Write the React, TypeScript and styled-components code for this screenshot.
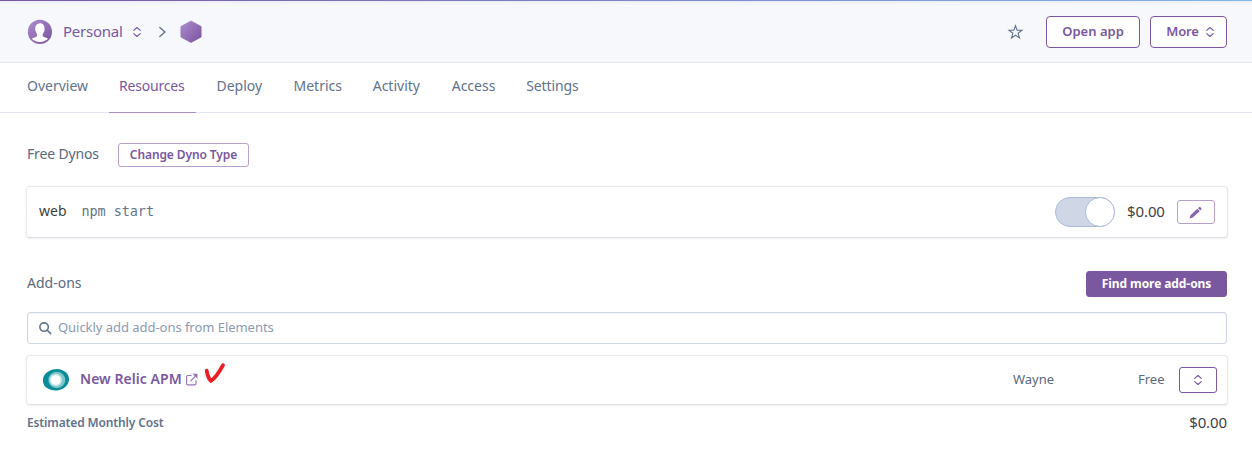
import React from 'react';
import styled, { createGlobalStyle } from 'styled-components';

const Global = createGlobalStyle`
  * { box-sizing: border-box; }
  body {
    margin: 0;
    background: #fff;
    font-family: 'Noto Sans', 'Open Sans', sans-serif;
    font-size: 14px;
    color: #596981;
  }
`;

const Page = styled.div`
  height: 453px;
  overflow: hidden;
`;

const TopStripe = styled.div`
  height: 1px;
  background: linear-gradient(90deg, #79589f, #7d8fd0 60%, #7fb8e8);
`;

const Header = styled.header`
  height: 62px;
  display: flex;
  align-items: center;
  padding: 0 25px 0 27px;
  background: linear-gradient(#eceef5, #f7f8fc 4px);
  border-bottom: 1px solid #e3e7f2;
`;

const Label = styled.span<{ $size?: number; $weight?: number; $color?: string; $spacing?: number; $width?: number; $left?: number }>`
  flex: none;
  box-sizing: content-box;
  white-space: nowrap;
  line-height: 20px;
  padding-bottom: ${p => (p.$size === 12 ? 0 : 2)}px;
  margin-left: ${p => p.$left ?? 0}px;
  width: ${p => (p.$width ? `${p.$width}px` : 'auto')};
  font-size: ${p => p.$size ?? 14}px;
  font-weight: ${p => p.$weight ?? 400};
  color: ${p => p.$color ?? '#596981'};
  letter-spacing: ${p => p.$spacing ?? 0}px;
`;

const Amount = styled(Label)`
  font-size: 15px;
  color: #3f3f44;
  letter-spacing: -0.1px;
`;

const Crumbs = styled.div`
  flex: 1;
  display: flex;
  align-items: center;
`;

const Icon = styled.svg<{ $left?: number }>`
  display: block;
  flex: none;
  overflow: visible;
  margin-left: ${p => p.$left ?? 0}px;
`;

const CheckMark = styled(Icon)`
  margin-bottom: 14px;
`;

const Button = styled.button<{ $w: number; $h: number; $soft?: boolean; $solid?: boolean; $left?: number }>`
  flex: none;
  display: flex;
  align-items: center;
  justify-content: center;
  width: ${p => p.$w}px;
  height: ${p => p.$h}px;
  margin: 0 0 0 ${p => p.$left ?? 0}px;
  padding: 0;
  border: 1px solid ${p => (p.$soft ? '#b79fd0' : '#79589f')};
  border-radius: ${p => (p.$h > 30 ? 4 : 3)}px;
  background: ${p => (p.$solid ? '#79589f' : '#fff')};
  font-family: inherit;
`;

const Tabs = styled.nav`
  display: flex;
  gap: 11px;
  height: 50px;
  padding-left: 17px;
  border-bottom: 1px solid #e3e7f2;
`;

const Tab = styled.a<{ $w: number; $active?: boolean; $spacing?: number }>`
  width: ${p => p.$w}px;
  height: 50px;
  padding: 13px 0 0 10px;
  line-height: 20px;
  white-space: nowrap;
  letter-spacing: ${p => p.$spacing ?? 0}px;
  color: ${p => (p.$active ? '#79589f' : '#62738d')};
  border-bottom: 1px solid ${p => (p.$active ? '#a98fc6' : 'transparent')};
`;

const Content = styled.main`
  padding: 30px 25px 0 27px;
`;

const Row = styled.div<{ $h: number; $top?: number }>`
  display: flex;
  align-items: center;
  height: ${p => p.$h}px;
  margin-top: ${p => p.$top ?? 0}px;
`;

const Card = styled(Row)`
  margin-left: -1px;
  margin-right: -1px;
  padding: 0 12px;
  background: #fff;
  border: 1px solid #e6e8ec;
  border-bottom-color: #dcdfe5;
  border-radius: 4px;
  box-shadow: 0 1px 2px rgba(60, 70, 90, 0.08);
`;

const AddonCard = styled(Card)`
  padding: 0 10px 0 15px;
`;

const Spacer = styled.div`
  flex: 1;
`;

const Command = styled.code`
  margin-left: 15px;
  padding-bottom: 2px;
  font-family: 'DejaVu Sans Mono', 'Liberation Mono', monospace;
  font-size: 13.5px;
  line-height: 20px;
  letter-spacing: -0.08px;
  color: #62738d;
`;

const Toggle = styled.div`
  width: 60px;
  height: 30px;
  display: flex;
  justify-content: flex-end;
  border: 1px solid #acbbd9;
  border-radius: 15px;
  background: #cfd7e6;
`;

const Knob = styled.div`
  width: 30px;
  height: 30px;
  margin: -1px -1px 0 0;
  border: 1px solid #acbbd9;
  border-radius: 50%;
  background: #fff;
`;

const SearchBox = styled(Row)`
  padding-left: 11px;
  border: 1px solid #cfd7e6;
  border-radius: 3px;
  box-shadow: inset 0 1px 2px rgba(100, 120, 160, 0.1);
`;

const Sort = ({ left }: { left?: number }) => (
  <Icon $left={left} width="8" height="10" viewBox="0 0 8 10" fill="none" stroke="#79589f" strokeWidth="1.2" strokeLinecap="round" strokeLinejoin="round">
    <path d="M.7 3.4 4 .5l3.3 2.9M.7 6.6 4 9.5l3.3-2.9" />
  </Icon>
);

const Avatar = () => (
  <Icon width="25" height="25" viewBox="0 0 25 25">
    <defs>
      <linearGradient id="violet" x1="0" y1="0" x2="1" y2="1">
        <stop offset="0" stopColor="#ad8dd0" />
        <stop offset="1" stopColor="#79539d" />
      </linearGradient>
    </defs>
    <circle cx="12.9" cy="12.9" r="12.1" fill="url(#violet)" />
    <path d="M12.9 4.200c-3 0-4.700 2.100-4.700 5.300 0 2.500.8 4.400 2 5.700.3 1.800-.5 2.500-2.100 3-1.500.5-2.500.9-3.400 1.500 2 2 4.900 3.200 8.200 3.200s6.200-1.200 8.200-3.200c-.9-.6-1.900-1-3.400-1.500-1.600-.5-2.400-1.200-2.100-3 1.200-1.300 2-3.200 2-5.700 0-3.200-1.700-5.300-4.700-5.300z" fill="#fff" />
  </Icon>
);

const tabs = [
  { name: 'Overview', w: 81, spacing: 0 },
  { name: 'Resources', w: 86.5, spacing: -0.2, active: true },
  { name: 'Deploy', w: 66, spacing: 0 },
  { name: 'Metrics', w: 68.2, spacing: 0 },
  { name: 'Activity', w: 68, spacing: 0 },
  { name: 'Access', w: 63.5, spacing: 0 },
  { name: 'Settings', w: 72, spacing: -0.1 },
];

export default function App() {
  return (
    <Page>
      <Global />
      <TopStripe />
      <Header>
        <Crumbs>
          <Avatar />
          <Label $size={15} $color="#79589f" $spacing={-0.25} $width={59} $left={11}>Personal</Label>
          <Sort left={11} />
          <Icon $left={18} width="7" height="10" viewBox="0 0 7 10" fill="none" stroke="#62738d" strokeWidth="1.4" strokeLinecap="round" strokeLinejoin="round">
            <path d="M.8.5 6 5 .8 9.500" />
          </Icon>
          <Icon $left={14} width="22" height="23" viewBox="0 0 22 23">
            <path d="M11 1 21.100 6.500v10.500L11 22.500.900 17V6.500z" fill="url(#violet)" stroke="url(#violet)" strokeWidth=".8" strokeLinejoin="round" />
          </Icon>
        </Crumbs>
        <Icon width="15" height="15" viewBox="0 0 15 15" fill="none" stroke="#62738d" strokeWidth="1.1">
          <path d="M7.500 1.700 9.100 6.200l4.900.1-3.900 3 1.400 4.700-4-2.800-4 2.800 1.400-4.700-3.900-3 4.900-.1z" />
        </Icon>
        <Button $w={94} $h={32} $left={23}>
          <Label $size={13} $weight={600} $color="#79589f">Open app</Label>
        </Button>
        <Button $w={77} $h={32} $left={10}>
          <Label $size={13} $weight={600} $color="#79589f" $left={3} $spacing={-0.1}>More</Label>
          <Sort left={7} />
        </Button>
      </Header>
      <Tabs>
        {tabs.map(t => (
          <Tab key={t.name} $w={t.w} $spacing={t.spacing} $active={t.active}>{t.name}</Tab>
        ))}
      </Tabs>
      <Content>
        <Row $h={24}>
          <Label $width={91} $spacing={-0.15}>Free Dynos</Label>
          <Button $w={131} $h={24} $soft>
            <Label $size={12} $weight={600} $color="#79589f" $spacing={-0.1}>Change Dyno Type</Label>
          </Button>
        </Row>
        <Card $h={52} $top={19}>
          <Label $color="#3f3f44">web</Label>
          <Command>npm start</Command>
          <Spacer />
          <Toggle><Knob /></Toggle>
          <Amount $width={38} $left={12}>$0.00</Amount>
          <Button $w={38} $h={24} $left={12} $soft>
            <Icon width="14" height="13" viewBox="0 0 14 13" fill="#8a64b3">
              <path d="M.5 12.500 1.500 9.200l6.800-6.400 2.400 2.400L3.800 11.500zM9 2.200l1-1c.5-.4 1-.4 1.400 0l.8.8c.4.500.4 1 0 1.400l-1 1z" />
            </Icon>
          </Button>
        </Card>
        <Row $h={26} $top={33}>
          <Label>Add-ons</Label>
          <Spacer />
          <Button $w={141} $h={26} $solid>
            <Label $size={12} $weight={700} $color="#fff" $spacing={-0.08}>Find more add-ons</Label>
          </Button>
        </Row>
        <SearchBox $h={32} $top={15}>
          <Icon width="13" height="13" viewBox="0 0 13 13" fill="none" stroke="#62738d" strokeWidth="1.600" strokeLinecap="round">
            <circle cx="5.100" cy="5.100" r="4.200" />
            <path d="m8.300 8.300 3.300 3.300" />
          </Icon>
          <Label $size={13} $color="#8c9ab2" $spacing={-0.04} $left={6}>Quickly add add-ons from Elements</Label>
        </SearchBox>
        <AddonCard $h={50} $top={11}>
          <Icon width="28" height="24" viewBox="0 0 28 24">
            <ellipse cx="14" cy="11.800" rx="13.100" ry="10.700" transform="rotate(-8 14 12)" fill="#078c9a" />
            <ellipse cx="14.800" cy="12" rx="8.500" ry="8.300" fill="#7dc5c9" />
            <circle cx="13.800" cy="12" r="6.200" fill="#c4e6e7" />
            <circle cx="13.800" cy="12" r="4.800" fill="#fff" />
          </Icon>
          <Label $weight={600} $color="#79589f" $width={102} $left={10} $spacing={0.05}>New Relic APM</Label>
          <Icon $left={4} width="12" height="12" viewBox="0 0 12 12" fill="none" stroke="#9474b8" strokeWidth="1.100" strokeLinecap="round" strokeLinejoin="round">
            <path d="M5 1.500H1.800Q.6 1.500.6 2.700v7q0 1.200 1.200 1.200h7q1.200 0 1.200-1.200V6.500M4.800 6.800 10 1.500" />
            <path d="M6.500-.3h5v5z" fill="#9474b8" stroke="none" />
          </Icon>
          <CheckMark $left={7} width="20" height="22" viewBox="0 0 20 22" fill="none" stroke="#ed1c24" strokeWidth="3.800" strokeLinecap="round" strokeLinejoin="round">
            <path d="M1.700 8.700c.6 3.500 1.200 7.300 4.200 10.300C10 16.500 14.500 9.700 18 3.200" />
          </CheckMark>
          <Spacer />
          <Label $size={13} $width={125}>Wayne</Label>
          <Label $size={13} $width={26}>Free</Label>
          <Button $w={38} $h={26} $left={15}><Sort /></Button>
        </AddonCard>
        <Row $h={20} $top={8}>
          <Label $size={12} $weight={600} $color="#62738d" $spacing={-0.14}>Estimated Monthly Cost</Label>
          <Spacer />
          <Amount>$0.00</Amount>
        </Row>
      </Content>
    </Page>
  );
}
